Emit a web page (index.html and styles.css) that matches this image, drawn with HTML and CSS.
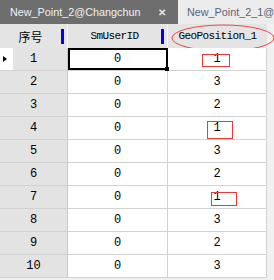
FILE: index.html
```html
<!DOCTYPE html>
<html lang="en">
<head>
    <meta charset="UTF-8">
    <title>New_Point_2@Changchun</title>
    <link rel="stylesheet" href="styles.css">
</head>
<body>
    <div class="tabbar">
        <div class="tab active">
            <span class="tab-title">New_Point_2@Changchun</span>
            <span class="tab-close">&#x2715;</span>
        </div>
        <div class="tab">
            <span class="tab-title">New_Point_2_1@</span>
        </div>
    </div>

    <div class="sheet">
        <div class="hd"><span class="hd-text cjk">序号</span><i class="mark"></i></div>
        <div class="hd"><span class="hd-text">SmUserID</span><i class="mark"></i></div>
        <div class="hd geo">
            <span class="hd-text">GeoPosition_1</span>
            <svg class="ring" width="104" height="28" viewBox="0 0 104 28">
                <ellipse cx="52" cy="14" rx="51" ry="13" fill="none" stroke="#e8474a" stroke-width="1"/>
            </svg>
        </div>

        <div class="rh current-row"><span class="pointer"></span>1</div>
        <div class="cell current">0</div>
        <div class="cell"><span class="num">1</span><span class="flag flag-1"></span></div>

        <div class="rh">2</div><div class="cell">0</div><div class="cell">3</div>
        <div class="rh">3</div><div class="cell">0</div><div class="cell">2</div>

        <div class="rh">4</div>
        <div class="cell">0</div>
        <div class="cell"><span class="num">1</span><span class="flag flag-4"></span></div>

        <div class="rh">5</div><div class="cell">0</div><div class="cell">3</div>
        <div class="rh">6</div><div class="cell">0</div><div class="cell">2</div>

        <div class="rh">7</div>
        <div class="cell">0</div>
        <div class="cell"><span class="num">1</span><span class="flag flag-7"></span></div>

        <div class="rh">8</div><div class="cell">0</div><div class="cell">3</div>
        <div class="rh">9</div><div class="cell">0</div><div class="cell">2</div>
        <div class="rh">10</div><div class="cell">0</div><div class="cell">3</div>
    </div>
</body>
</html>
```

FILE: styles.css
```css
body {
    margin: 0;
    width: 274px;
    height: 280px;
    overflow: hidden;
    background: #f0f0f0;
    font-family: "Liberation Mono", "DejaVu Sans Mono", monospace;
}
.tabbar {
    display: flex;
    height: 24px;
    background: #f0f0f0;
    overflow: hidden;
}
.tab {
    display: flex;
    align-items: center;
    padding: 0 9px;
    background: #ececec;
    color: #56657a;
    font-family: "Liberation Sans", Arial, sans-serif;
    font-size: 10.8px;
    white-space: nowrap;
}
.tab.active {
    background: #6e6e6e;
    color: #eef2f6;
    width: 158px;
    padding: 0 10px;
    flex: none;
}
.tab-title { flex: 1; }
.tab-close {
    font-size: 10px;
    font-weight: bold;
    color: #e6e6e6;
    margin-right: 2px;
}
.sheet {
    display: grid;
    grid-template-columns: 68px 100px 99px;
    grid-template-rows: 24px;
    grid-auto-rows: 23px;
    font-size: 12px;
    color: #000;
}
.hd {
    display: flex;
    align-items: center;
    background: #e4e4e4;
    border-right: 1px solid #f4f4f4;
    position: relative;
    font-size: 11px;
}
.hd-text {
    flex: 1;
    text-align: center;
    letter-spacing: -0.6px;
}
.hd-text.cjk {
    font-family: "Noto Sans CJK SC", sans-serif;
    font-size: 12px;
    letter-spacing: 0;
}
.mark {
    width: 3px;
    height: 15px;
    background: #0000ff;
    margin-right: 3px;
}
.geo { border-right: none; }
.ring {
    position: absolute;
    left: 3px;
    top: 0;
    overflow: visible;
}
.rh, .cell {
    display: flex;
    align-items: center;
    justify-content: center;
    border-bottom: 1px solid #d2d2d2;
    position: relative;
}
.rh {
    background: #e3e3e3;
    border-right: 1px solid #c8c8c8;
}
.cell {
    background: #fff;
    border-right: 1px solid #d2d2d2;
}
.current-row {
    background: linear-gradient(to right, #fff 13px, #e3e3e3 13px);
}
.pointer {
    position: absolute;
    left: 3px;
    top: 8px;
    border-left: 4px solid #000;
    border-top: 3px solid transparent;
    border-bottom: 3px solid transparent;
}
.current::after {
    content: "";
    position: absolute;
    left: 0;
    top: 0;
    right: -1px;
    bottom: 0;
    border: 2px solid #000;
}
.current::before {
    content: "";
    position: absolute;
    right: -2px;
    bottom: -1px;
    width: 4px;
    height: 4px;
    background: #000;
    z-index: 1;
}
.flag {
    position: absolute;
    border: 1px solid #e53b3b;
}
.flag-1 { left: 34px; top: 6px; width: 26px; height: 11px; }
.flag-4 { left: 39px; top: 4px; width: 24px; height: 16px; }
.flag-7 { left: 43px; top: 6px; width: 24px; height: 12px; }
```
